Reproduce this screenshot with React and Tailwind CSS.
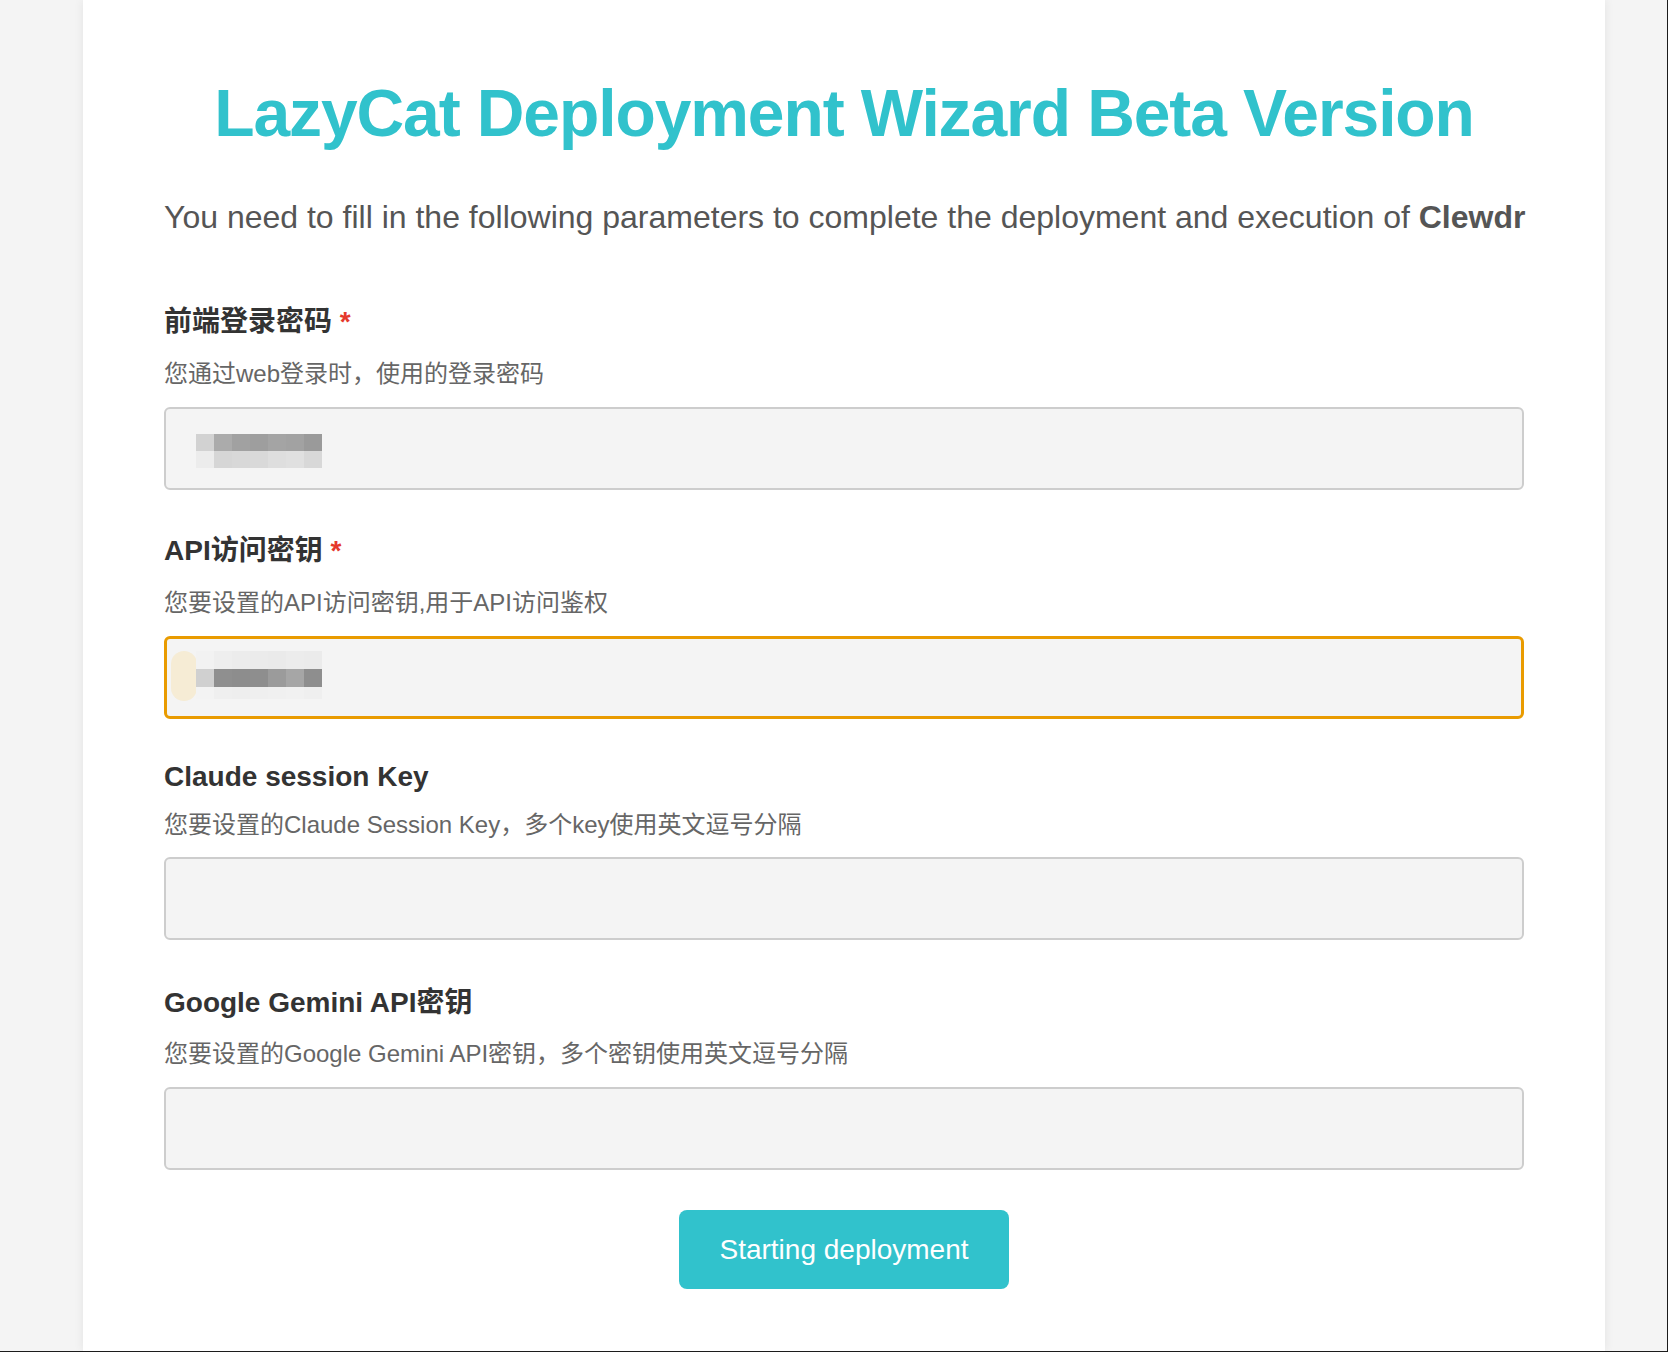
import React from 'react';

const TEAL = 'bg-[#31c2cc]';

const pass1 = {
  top: ['#d2d2d2', '#ababab', '#a1a1a1', '#9e9e9e', '#a4a4a4', '#a2a2a2', '#9a9a9a'],
  bottom: ['#ececec', '#d6d6d6', '#d8d8d8', '#d9d9d9', '#dedede', '#e0e0e0', '#d8d8d8'],
};

const pass2 = {
  top: ['#f2f2f2', '#eeeeee', '#ececec', '#ebebeb', '#eaeaea', '#ececec', '#ebebeb'],
  mid: ['#d0d0d0', '#8f8f8f', '#8d8d8d', '#8e8e8e', '#9b9b9b', '#a6a6a6', '#8e8e8e'],
  bottom: ['#f3f3f3', '#efefef', '#eeeeee', '#efefef', '#f0f0f0', '#f1f1f1', '#efefef'],
};

function Row({ colors, h }) {
  return (
    <div className="flex">
      {colors.map((c, i) => (
        <span key={i} className={`block w-[18px] ${h}`} style={{ backgroundColor: c }} />
      ))}
    </div>
  );
}

function Field({ label, required, desc, top, gap1, gap2, focused, children }) {
  return (
    <div className={top}>
      <div className="text-[28px] leading-[32px] font-bold text-[#333]">
        {label}
        {required && <span className="text-[#e5392c]"> *</span>}
      </div>
      <div className={`${gap1} text-[24px] leading-[28px] text-[#666]`}>{desc}</div>
      <div
        className={`${gap2} relative h-[83px] rounded-[6px] bg-[#f4f4f4] ${
          focused ? 'border-[3px] border-[#e99b00]' : 'border-2 border-[#cdcdcd]'
        }`}
      >
        {children}
      </div>
    </div>
  );
}

export default function App() {
  return (
    <div className="h-screen overflow-hidden bg-[#f4f4f4] border-r border-b border-[#1c1c1c] font-['Liberation_Sans','Noto_Sans_CJK_SC',sans-serif]">
      <div className="ml-[83px] w-[1522px] h-full bg-white px-[81px] shadow-[0_0_10px_rgba(0,0,0,0.07)]">
        <h1 className="pt-[75px] text-center text-[66px] leading-[76px] font-bold tracking-[-1.1px] text-[#31c2cc]">
          LazyCat Deployment Wizard Beta Version
        </h1>
        <p className="mt-[46px] text-[32px] leading-[40px] text-[#555] whitespace-nowrap">
          You need to fill in the following parameters to complete the deployment and execution of{' '}
          <span className="font-bold">Clewdr</span>
        </p>

        <Field
          label="前端登录密码"
          required
          desc="您通过web登录时，使用的登录密码"
          top="mt-[69px]"
          gap1="mt-[22px]"
          gap2="mt-[19px]"
        >
          <div className="pl-[30px] pt-[25px]">
            <Row colors={pass1.top} h="h-[17px]" />
            <Row colors={pass1.bottom} h="h-[17px]" />
          </div>
        </Field>

        <Field
          label="API访问密钥"
          required
          desc="您要设置的API访问密钥,用于API访问鉴权"
          top="mt-[45px]"
          gap1="mt-[22px]"
          gap2="mt-[19px]"
          focused
        >
          <div className="absolute left-[4px] top-[12px] w-[26px] h-[50px] rounded-full bg-[#f7e8c8] opacity-70" />
          <div className="relative pl-[29px] pt-[12px]">
            <Row colors={pass2.top} h="h-[18px]" />
            <Row colors={pass2.mid} h="h-[18px]" />
            <Row colors={pass2.bottom} h="h-[12px]" />
          </div>
        </Field>

        <Field
          label="Claude session Key"
          desc="您要设置的Claude Session Key，多个key使用英文逗号分隔"
          top="mt-[42px]"
          gap1="mt-[18px]"
          gap2="mt-[18px]"
        />

        <Field
          label="Google Gemini API密钥"
          desc="您要设置的Google Gemini API密钥，多个密钥使用英文逗号分隔"
          top="mt-[47px]"
          gap1="mt-[21px]"
          gap2="mt-[19px]"
        />

        <div className="mt-[40px] flex justify-center">
          <button
            className={`${TEAL} w-[330px] h-[79px] rounded-[8px] text-white text-[28px] leading-[32px]`}
          >
            Starting deployment
          </button>
        </div>
      </div>
    </div>
  );
}
